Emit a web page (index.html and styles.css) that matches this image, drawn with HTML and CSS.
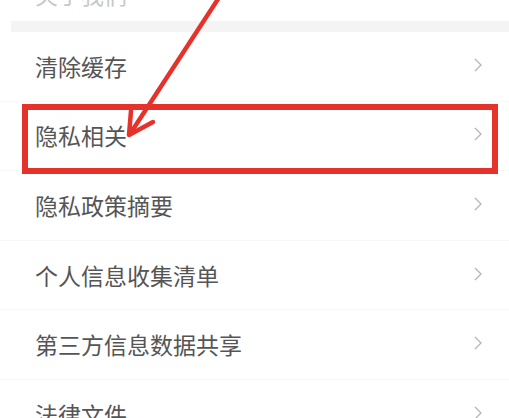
FILE: index.html
```html
<!DOCTYPE html>
<html lang="zh-CN">
<head>
  <meta charset="UTF-8" />
  <meta name="viewport" content="width=device-width, initial-scale=1.0" />
  <title>设置</title>
  <link rel="stylesheet" href="styles.css">
</head>
<body>
  <div class="page">
    <div class="top-row">
      <span class="label">关于我们</span>
    </div>
    <div class="gap"></div>

    <div class="list">
      <div class="row">
        <span class="label">清除缓存</span>
        <svg class="chev" viewBox="0 0 8 14"><polyline points="1,1 7,7 1,13" /></svg>
      </div>
      <div class="row marked">
        <span class="label">隐私相关</span>
        <svg class="chev" viewBox="0 0 8 14"><polyline points="1,1 7,7 1,13" /></svg>
        <div class="mark-box"></div>
      </div>
      <div class="row">
        <span class="label">隐私政策摘要</span>
        <svg class="chev" viewBox="0 0 8 14"><polyline points="1,1 7,7 1,13" /></svg>
      </div>
      <div class="row">
        <span class="label">个人信息收集清单</span>
        <svg class="chev" viewBox="0 0 8 14"><polyline points="1,1 7,7 1,13" /></svg>
      </div>
      <div class="row">
        <span class="label">第三方信息数据共享</span>
        <svg class="chev" viewBox="0 0 8 14"><polyline points="1,1 7,7 1,13" /></svg>
      </div>
      <div class="row">
        <span class="label">法律文件</span>
        <svg class="chev" viewBox="0 0 8 14"><polyline points="1,1 7,7 1,13" /></svg>
      </div>
    </div>

    <!-- annotation arrow pointing at 隐私相关 -->
    <svg class="arrow" viewBox="0 0 509 418">
      <line x1="220" y1="-4" x2="130" y2="134" />
      <polyline points="131,111 129,135 153,122" />
    </svg>
  </div>
</body>
</html>
```

FILE: styles.css
```css
:root {
  --bg: #ffffff;
  --fg: #555555;
  --chev: #b4b4b4;
  --line: #f8f8f8;
  --mark: #e5332c;
}

body {
  margin: 0;
  background: var(--bg);
  color: var(--fg);
  font-family: "Noto Sans CJK SC", "Noto Sans", sans-serif;
  overflow: hidden;
}

.page {
  position: relative;
  width: 509px;
  height: 418px;
  overflow: hidden;
}

.label {
  font-size: 23px;
  line-height: 1;
  color: var(--fg);
}

.top-row {
  height: 21px;
  padding-left: 35px;
  overflow: hidden;
}
.top-row .label {
  display: block;
  margin-top: -17px;
  color: #c8c8c8;
}

.gap {
  height: 11px;
  margin-left: 11px;
  background: #f4f4f4;
}

.list {
  display: flex;
  flex-direction: column;
}

.row {
  position: relative;
  height: 69.6px;
  display: flex;
  align-items: center;
  justify-content: space-between;
  padding: 0 27px 0 35px;
  border-bottom: 1px solid var(--line);
  box-sizing: border-box;
}

.chev {
  width: 8px;
  height: 14px;
  margin-top: -3px;
}
.chev polyline {
  fill: none;
  stroke: var(--chev);
  stroke-width: 1.3;
}

.mark-box {
  position: absolute;
  left: 22px;
  right: 11px;
  top: 2px;
  height: 70px;
  border: 6px solid var(--mark);
  box-sizing: border-box;
}

.arrow {
  position: absolute;
  left: 0;
  top: 0;
  width: 509px;
  height: 418px;
  pointer-events: none;
}
.arrow line,
.arrow polyline {
  fill: none;
  stroke: var(--mark);
  stroke-width: 4.5;
  stroke-linecap: round;
  stroke-linejoin: round;
}
```
